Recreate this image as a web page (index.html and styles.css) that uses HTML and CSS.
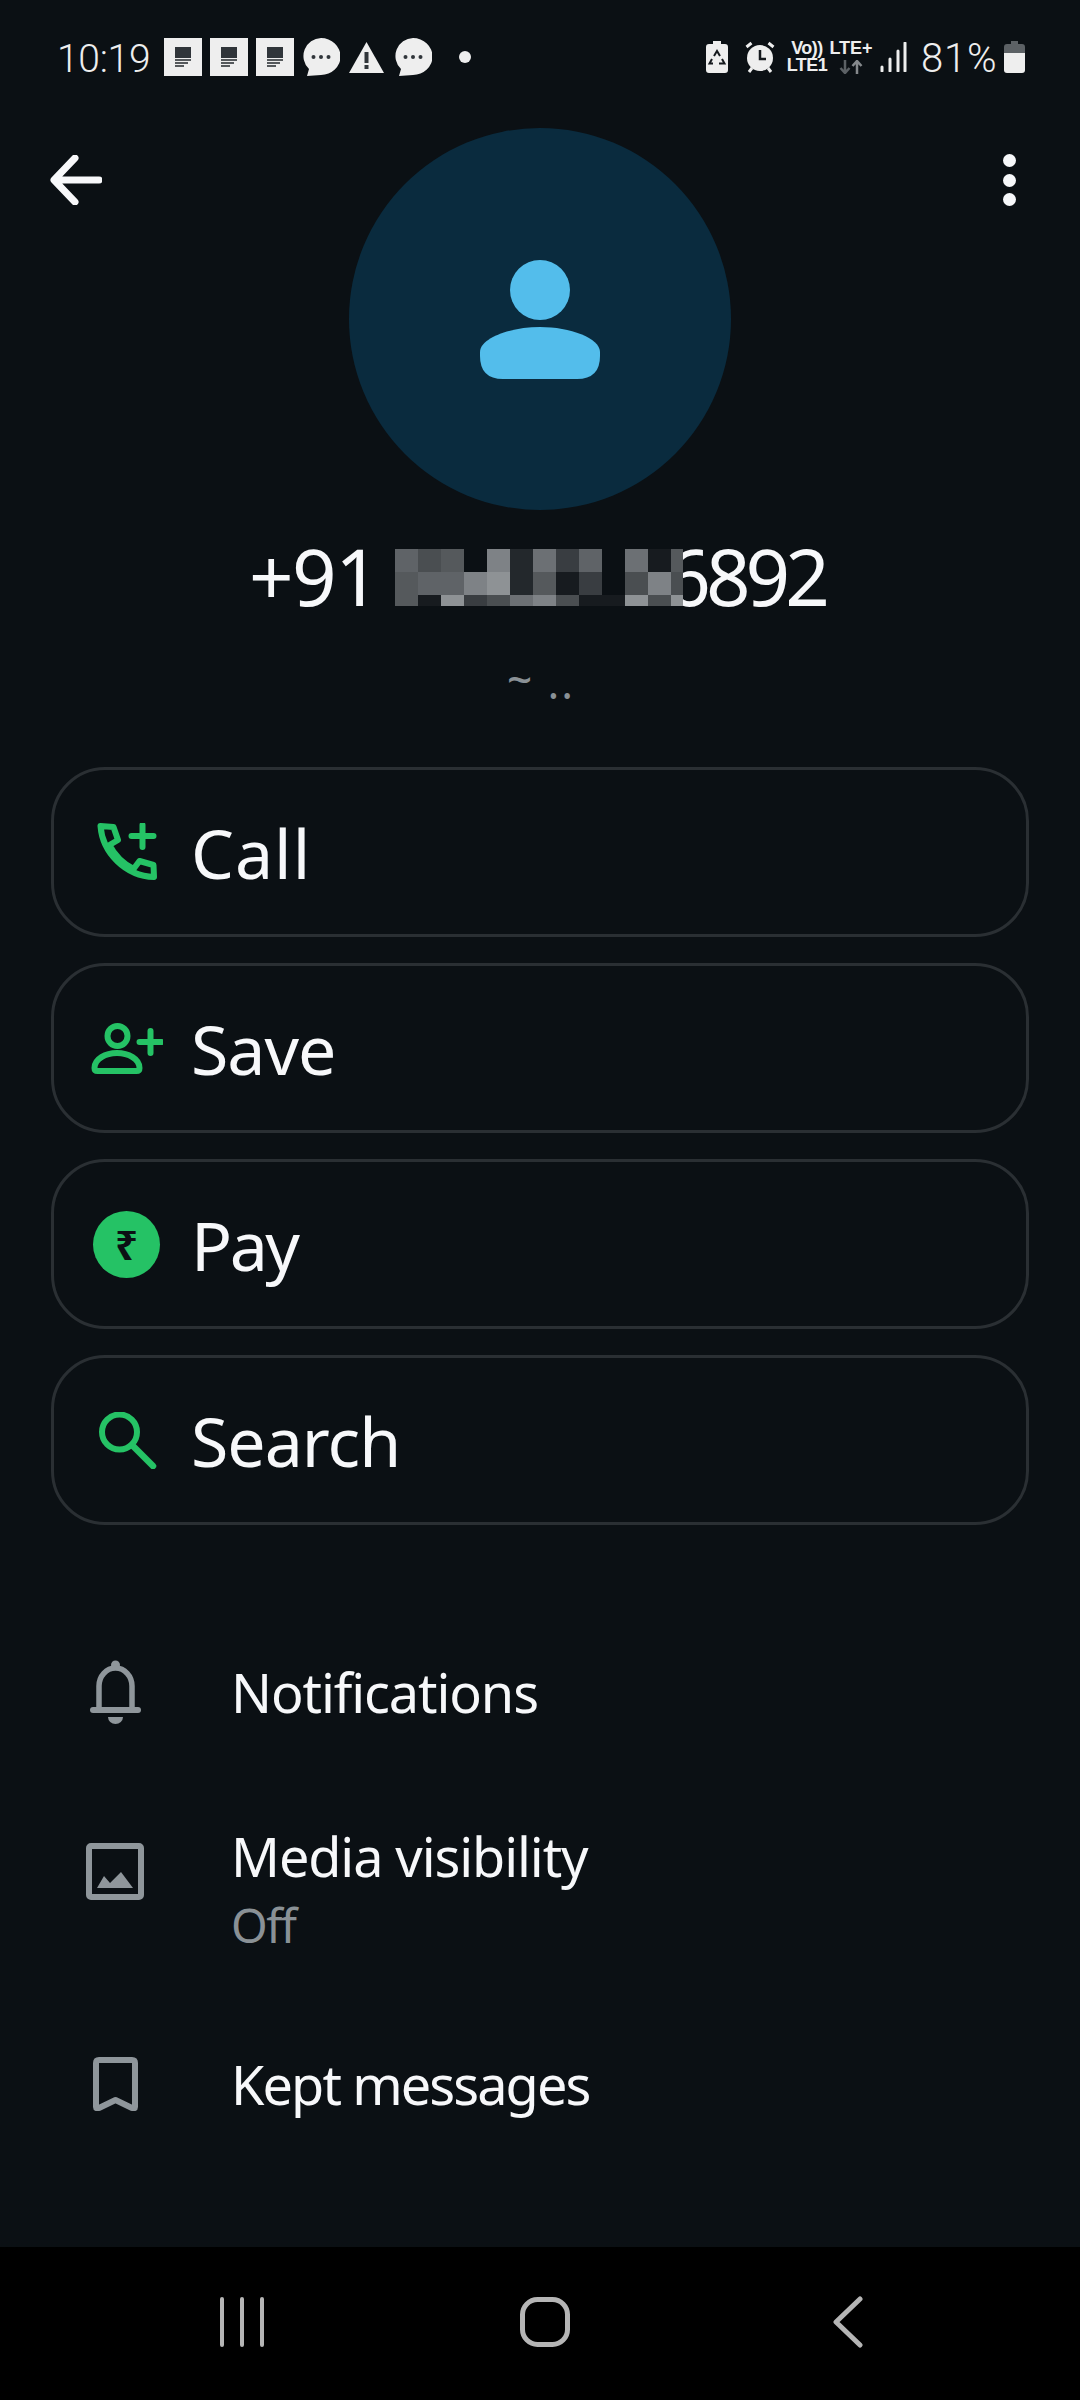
FILE: index.html
```html
<!DOCTYPE html>
<html>

<head>
  <title>Contact info</title>
  <link rel="stylesheet" href="styles.css">
</head>

<body>
  <div class="screen">
    <div class="status-bar">
      <div class="status-left">
        <span class="clock">10:19</span>
        <svg class="note" viewBox="0 0 38 38"><rect width="38" height="38" fill="#eeeeee"/><path d="M11 9h16v11H11z" fill="#30353a"/><path d="M11 22h16M11 25h13M11 28h9" stroke="#55595c" stroke-width="2"/></svg>
        <svg class="note" viewBox="0 0 38 38"><rect width="38" height="38" fill="#eeeeee"/><path d="M11 9h16v11H11z" fill="#30353a"/><path d="M11 22h16M11 25h13M11 28h9" stroke="#55595c" stroke-width="2"/></svg>
        <svg class="note" viewBox="0 0 38 38"><rect width="38" height="38" fill="#eeeeee"/><path d="M11 9h16v11H11z" fill="#30353a"/><path d="M11 22h16M11 25h13M11 28h9" stroke="#55595c" stroke-width="2"/></svg>
        <svg class="bubble" viewBox="0 0 38 38"><path d="M19 0a19 18 0 0 1 0 37L5 38l2-7A18 18 0 0 1 19 0z" fill="#eeeeee"/><circle cx="11.500" cy="19" r="2" fill="#30353a"/><circle cx="19" cy="19" r="2" fill="#30353a"/><circle cx="26.500" cy="19" r="2" fill="#30353a"/></svg>
        <svg class="warn" viewBox="0 0 35 32"><path d="M17.500 1L35 32H0z" fill="#eeeeee"/><path d="M15.500 11h4v11h-4zM15.500 24h4v4h-4z" fill="#30353a"/></svg>
        <svg class="bubble" viewBox="0 0 38 38"><path d="M19 0a19 18 0 0 1 0 37L5 38l2-7A18 18 0 0 1 19 0z" fill="#eeeeee"/><circle cx="11.500" cy="19" r="2" fill="#30353a"/><circle cx="19" cy="19" r="2" fill="#30353a"/><circle cx="26.500" cy="19" r="2" fill="#30353a"/></svg>
        <span class="more-dot"></span>
      </div>
      <div class="status-right">
        <svg class="saver" viewBox="0 0 22 32"><path d="M7 0h8v3h4q3 0 3 3v23q0 3-3 3H3q-3 0-3-3V6q0-3 3-3h4z" fill="#eeeeee"/><path d="M8 15l3-5 3 5M16 18l2.500 4.500H13M7 22.500H3.500L6 18" fill="none" stroke="#15191d" stroke-width="2"/></svg>
        <svg class="alarm" viewBox="0 0 30 32"><circle cx="15" cy="17" r="13" fill="#eeeeee"/><path d="M1.500 6l5-4M28.500 6l-5-4M4 31l3-4M26 31l-3-4" stroke="#eeeeee" stroke-width="3"/><path d="M15 9v9h6" fill="none" stroke="#15191d" stroke-width="2.500"/></svg>
        <div class="volte">
          <span class="vo">Vo))</span>
          <span class="lte1">LTE1</span>
        </div>
        <div class="lte-plus">
          <span class="lte-text">LTE+</span>
          <svg class="arrows" viewBox="0 0 24 14"><path d="M6 0v12M1.500 8L6 13l4.500-5" fill="none" stroke="#5c6165" stroke-width="2.500"/><path d="M18 14V2M13.500 6L18 1l4.500 5" fill="none" stroke="#85898c" stroke-width="2.500"/></svg>
        </div>
        <svg class="signal" viewBox="0 0 27 30"><path d="M2 25v4M10 17v12M18 9v20M25 1v28" stroke="#eeeeee" stroke-width="3" stroke-linecap="round"/></svg>
        <span class="pct">81%</span>
        <svg class="battery" viewBox="0 0 21 32"><path d="M7 0h7v3h4q3 0 3 3v6H0V6q0-3 3-3h4z" fill="#5c6165"/><path d="M0 12h21v17q0 3-3 3H3q-3 0-3-3z" fill="#eeeeee"/></svg>
      </div>
    </div>

    <div class="content">
      <div class="header">
        <button class="icon-btn back">
          <svg viewBox="0 0 52 50"><path d="M25 3L4 25l21 22M5 25h44" fill="none" stroke="#f7f8fa" stroke-width="7" stroke-linecap="round" stroke-linejoin="round"/></svg>
        </button>
        <div class="avatar">
          <svg class="person" viewBox="0 0 120 120"><circle cx="60" cy="30" r="30" fill="#53bdeb"/><path d="M0 92C0 78 30 67 60 67s60 11 60 25v4q0 23-23 23H23Q0 119 0 96z" fill="#53bdeb"/></svg>
        </div>
        <button class="icon-btn menu">
          <span class="menu-dot"></span>
          <span class="menu-dot"></span>
          <span class="menu-dot"></span>
        </button>
      </div>

      <div class="name">
        <span class="prefix">+91</span>
        <div class="pixels">
          <i class="a6"></i><i class="a4"></i><i class="a5"></i><i class="a0"></i><i class="a8"></i><i class="a2"></i><i class="a7"></i><i class="a3"></i><i class="a6"></i><i class="a0"></i><i class="a7"></i><i class="a1"></i><i class="a5"></i>
          <i class="a5"></i><i class="a6"></i><i class="a6"></i><i class="a8"></i><i class="a9"></i><i class="a2"></i><i class="a5"></i><i class="a1"></i><i class="a3"></i><i class="a0"></i><i class="a4"></i><i class="a8"></i><i class="a4"></i>
          <i class="a5"></i><i class="a1"></i><i class="a9"></i><i class="a3"></i><i class="a4"></i><i class="a7"></i><i class="a8"></i><i class="a4"></i><i class="a1"></i><i class="a1"></i><i class="a9"></i><i class="a4"></i><i class="a9"></i>
        </div>
        <span>6892</span>
      </div>
      <div class="push-name"><span class="tilde">~</span> ..</div>

      <div class="actions">
        <div class="action">
          <svg class="action-icon call" viewBox="0 0 59 58"><path d="M3 3l13 1 4.500 13-8.500 5c5 10 13 18 24 24l6-8 14 4 .5 12C28 53 5 30 3 3z" fill="none" stroke="#25c265" stroke-width="6" stroke-linejoin="round"/><path d="M45 2v22M34 13h22" stroke="#25c265" stroke-width="6" stroke-linecap="round"/></svg>
          <span class="wide">Call</span>
        </div>
        <div class="action">
          <svg class="action-icon save" viewBox="0 0 71 51"><circle cx="26" cy="13" r="10" fill="none" stroke="#25c265" stroke-width="6"/><path d="M3 45c0-9 11-15 22.500-15S48 36 48 45q0 3-3 3H6q-3 0-3-3z" fill="none" stroke="#25c265" stroke-width="6"/><path d="M59 8v22M48 19h22" stroke="#25c265" stroke-width="6" stroke-linecap="round"/></svg>
          <span>Save</span>
        </div>
        <div class="action">
          <div class="action-icon rupee">₹</div>
          <span class="narrow">Pay</span>
        </div>
        <div class="action">
          <svg class="action-icon search" viewBox="0 0 57 57"><circle cx="21" cy="20" r="17.500" fill="none" stroke="#25c265" stroke-width="6"/><path d="M33.500 33l21 21" stroke="#25c265" stroke-width="6.500" stroke-linecap="round"/></svg>
          <span>Search</span>
        </div>
      </div>

      <div class="list">
        <div class="row">
          <div class="row-icon">
            <svg class="bell" viewBox="0 0 51 64"><circle cx="25.500" cy="5" r="4.500" fill="#8f969b"/><path d="M9 49V26a16.500 18 0 0 1 33 0v23" fill="none" stroke="#8f969b" stroke-width="5.500"/><path d="M3 50h45" stroke="#8f969b" stroke-width="6" stroke-linecap="round"/><path d="M18 57h15a7.500 7 0 0 1-15 0z" fill="#8f969b"/></svg>
          </div>
          <div class="row-text">
            <div class="row-title">Notifications</div>
          </div>
        </div>
        <div class="row">
          <div class="row-icon">
            <svg class="picture" viewBox="0 0 58 57"><rect x="3" y="3" width="52" height="51" rx="2" fill="none" stroke="#8f969b" stroke-width="6"/><path d="M11 45l7-12 6 7 11-11 12 16z" fill="#8f969b"/></svg>
          </div>
          <div class="row-text">
            <div class="row-title">Media visibility</div>
            <div class="row-sub">Off</div>
          </div>
        </div>
        <div class="row">
          <div class="row-icon">
            <svg class="bookmark" viewBox="0 0 45 54"><path d="M3 6q0-3 3-3h33q3 0 3 3v44q0 2-3 1l-16.500-8L6 51q-3 1-3-1z" fill="none" stroke="#8f969b" stroke-width="6" stroke-linejoin="round"/></svg>
          </div>
          <div class="row-text">
            <div class="row-title tight">Kept messages</div>
          </div>
        </div>
      </div>
    </div>

    <div class="nav-bar">
      <svg class="nav-recents" viewBox="0 0 46 50"><path d="M3 2v46M23 2v46M43 2v46" stroke="#b5b5b5" stroke-width="4" stroke-linecap="round"/></svg>
      <svg class="nav-home" viewBox="0 0 50 50"><rect x="2.500" y="2.500" width="45" height="45" rx="15" fill="none" stroke="#b5b5b5" stroke-width="5"/></svg>
      <svg class="nav-back" viewBox="0 0 30 52"><path d="M27 3L3 26l24 23" fill="none" stroke="#b5b5b5" stroke-width="5" stroke-linecap="round" stroke-linejoin="round"/></svg>
    </div>
  </div>
</body>

</html>
```

FILE: styles.css
```css
* {
  box-sizing: border-box;
}

body {
  margin: 0;
  background-color: #0b1014;
  font-family: "Noto Sans", sans-serif;
  color: #f7f8fa;
}

.screen {
  width: 1080px;
  height: 2400px;
  display: flex;
  flex-direction: column;
  overflow: hidden;
}

/* status bar */
.status-bar {
  height: 114px;
  flex: none;
  display: flex;
  align-items: center;
  justify-content: space-between;
  padding: 0 55px 0 57px;
  color: #eeeeee;
}

.status-left,
.status-right {
  display: flex;
  align-items: center;
}

.clock,
.pct {
  font-family: Roboto, sans-serif;
  font-weight: 300;
  font-size: 39px;
  line-height: 44px;
  padding-top: 3px;
}

.clock {
  width: 107px;
  letter-spacing: -0.300px;
}

.note {
  width: 38px;
  height: 38px;
  margin-right: 8px;
}

.bubble {
  width: 38px;
  height: 38px;
  margin-right: 9px;
}

.warn {
  width: 35px;
  height: 32px;
  margin-right: 10px;
}

.more-dot {
  width: 12px;
  height: 12px;
  margin-left: 18px;
  border-radius: 50%;
  background-color: #eeeeee;
}

.saver {
  width: 22px;
  height: 32px;
  margin-right: 17px;
}

.alarm {
  width: 30px;
  height: 32px;
  margin-right: 13px;
}

.volte,
.lte-plus {
  display: flex;
  flex-direction: column;
  align-items: center;
  font-family: "Liberation Sans", sans-serif;
  font-size: 18px;
  line-height: 17px;
  font-weight: 700;
}

.volte {
  width: 38px;
  margin-right: 6px;
}

.vo {
  font-size: 18px;
  letter-spacing: -0.500px;
}

.lte1 {
  letter-spacing: -0.500px;
}

.lte-plus {
  width: 38px;
  margin-right: 10px;
  gap: 3px;
}

.arrows {
  width: 24px;
  height: 14px;
}

.signal {
  width: 27px;
  height: 30px;
  margin-right: 14px;
}

.pct {
  width: 83px;
  font-size: 40px;
  letter-spacing: 0.800px;
}

.battery {
  width: 21px;
  height: 32px;
}

/* header */
.content {
  flex: 1;
}

.header {
  display: grid;
  grid-template-columns: 1fr 382px 1fr;
  padding-top: 14px;
}

.icon-btn {
  background-color: transparent;
  border: none;
  padding: 0;
}

.back {
  justify-self: start;
  margin: 27px 0 0 50px;
  width: 52px;
  height: 50px;
}

.back svg {
  width: 52px;
  height: 50px;
  display: block;
}

.menu {
  justify-self: end;
  margin: 26px 64px 0 0;
  display: flex;
  flex-direction: column;
  gap: 6.500px;
}

.menu-dot {
  width: 13px;
  height: 13px;
  border-radius: 50%;
  background-color: #f7f8fa;
}

.avatar {
  width: 382px;
  height: 382px;
  border-radius: 50%;
  background-color: #0a2b3e;
  display: flex;
  align-items: center;
  justify-content: center;
}

.person {
  width: 120px;
  height: 120px;
  margin-bottom: -2px;
}

.name {
  display: flex;
  align-items: flex-start;
  margin-top: 16px;
  padding-left: 249px;
  font-weight: 370;
  font-size: 78px;
  line-height: 100px;
  letter-spacing: -5px;
}

.prefix {
  letter-spacing: -1.500px;
}

.pixels {
  display: grid;
  grid-template-columns: repeat(12, 23px) 12px;
  grid-template-rows: 23px 23px 11px;
  margin: 23px -17px 0 17px;
  position: relative;
  z-index: 1;
}

.a0 { background-color: #0b1014; }
.a1 { background-color: #171b1f; }
.a2 { background-color: #23282c; }
.a3 { background-color: #393d41; }
.a4 { background-color: #4a4e51; }
.a5 { background-color: #55595c; }
.a6 { background-color: #5f6367; }
.a7 { background-color: #6c7074; }
.a8 { background-color: #7e8286; }
.a9 { background-color: #8e9295; }

.push-name {
  margin-top: 28px;
  height: 56px;
  padding-left: 2px;
  text-align: center;
  font-size: 44px;
  line-height: 56px;
  letter-spacing: 2px;
  color: #8a9196;
}

.tilde {
  position: relative;
  top: -4px;
  font-weight: 500;
}

/* action buttons */
.actions {
  margin: 57px 51px 0;
  display: flex;
  flex-direction: column;
  gap: 26px;
}

.action {
  height: 170px;
  display: flex;
  align-items: center;
  gap: 28px;
  padding-left: 37px;
  border: 3px solid #2a2f33;
  border-radius: 54px;
  font-weight: 370;
  font-size: 68px;
  letter-spacing: -1px;
}

.wide {
  letter-spacing: 1px;
}

.narrow {
  letter-spacing: -2.500px;
}

.action-icon {
  width: 72px;
  flex: none;
}

.call {
  height: 58px;
}

.save {
  height: 51px;
}

.search {
  height: 57px;
}

.rupee {
  width: 67px;
  height: 67px;
  margin: 0 3px 0 2px;
  border-radius: 50%;
  background-color: #25c265;
  color: #0b1014;
  font-family: "Noto Sans", "DejaVu Sans", sans-serif;
  font-weight: 700;
  font-size: 40px;
  line-height: 67px;
  letter-spacing: 0;
  text-align: center;
}

/* list */
.list {
  margin-top: 70px;
}

.row {
  height: 196px;
  display: flex;
  align-items: center;
  gap: 84px;
  padding: 0 0 2px 83px;
}

.row-icon {
  width: 64px;
  display: flex;
  justify-content: center;
}

.bell {
  width: 51px;
  height: 64px;
}

.picture {
  width: 58px;
  height: 57px;
  margin-bottom: 34px;
}

.bookmark {
  width: 45px;
  height: 54px;
}

.row-title {
  font-weight: 370;
  font-size: 54px;
  line-height: 68px;
  letter-spacing: -1.100px;
}

.tight {
  letter-spacing: -1.900px;
}

.row-sub {
  margin-top: 5px;
  font-weight: 370;
  font-size: 47px;
  line-height: 60px;
  letter-spacing: -1.500px;
  color: #8a9196;
}

/* navigation */
.nav-bar {
  height: 153px;
  flex: none;
  background-color: #000000;
  display: grid;
  grid-template-columns: repeat(3, 303px);
  justify-items: center;
  align-items: center;
  padding: 0 81px 4px 90px;
}

.nav-recents {
  width: 46px;
  height: 50px;
}

.nav-home {
  width: 50px;
  height: 50px;
}

.nav-back {
  width: 30px;
  height: 52px;
}
```
